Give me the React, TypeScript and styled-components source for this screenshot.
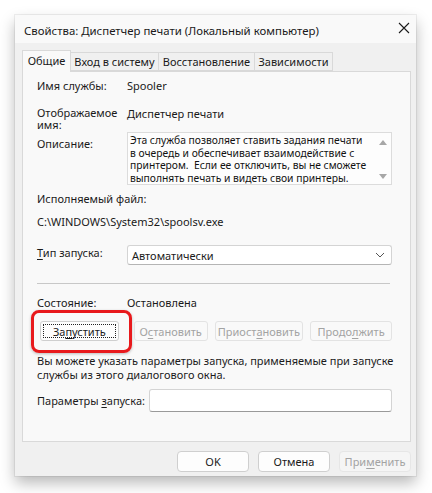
import styled, { createGlobalStyle } from 'styled-components';

const GlobalStyle = createGlobalStyle`
  html, body {
    margin: 0;
    padding: 0;
    background: #ffffff;
  }
  body {
    font-family: 'Noto Sans', 'Segoe UI', sans-serif;
    font-size: 11px;
    color: #1b1b1b;
  }
`;

const Page = styled.div`
  width: 432px;
  height: 493px;
  padding: 15px 0 0 15px;
  box-sizing: border-box;
`;

const Window = styled.div`
  width: 401px;
  height: 461px;
  background: #f0f0f0;
  display: flex;
  flex-direction: column;
  box-shadow: 0 7px 14px rgba(0, 0, 0, 0.28), 0 0 0 1px rgba(0, 0, 0, 0.06);
`;

const TitleBar = styled.div`
  height: 28px;
  background: #f9f9f9;
  display: flex;
  align-items: center;
  justify-content: space-between;
  padding: 3px 6px 0 9px;
  box-sizing: border-box;
  font-size: 11.4px;
  color: #1a1a1a;
`;

const CloseButton = styled.div`
  width: 12px;
  height: 12px;
  margin-top: -5px;
  display: flex;
`;

const Body = styled.div`
  flex: 1;
  display: flex;
  flex-direction: column;
  padding: 7px 5px 0 7px;
`;

const Tabs = styled.div`
  display: flex;
  align-items: flex-end;
  height: 21px;
  position: relative;
  z-index: 1;
`;

const Tab = styled.div<{ $active?: boolean; $w: number }>`
  width: ${(p) => p.$w}px;
  height: ${(p) => (p.$active ? 22 : 19)}px;
  box-sizing: border-box;
  border: 1px solid #d9d9d9;
  border-bottom: ${(p) => (p.$active ? 'none' : '1px solid #d9d9d9')};
  border-left: ${(p) => (p.$active ? '1px solid #d9d9d9' : 'none')};
  background: ${(p) => (p.$active ? '#f9f9f9' : '#f0f0f0')};
  display: flex;
  align-items: center;
  justify-content: center;
  margin-bottom: ${(p) => (p.$active ? -1 : 0)}px;
  padding-bottom: ${(p) => (p.$active ? 2 : 0)}px;
  color: #1a1a1a;
  white-space: nowrap;
`;

const Panel = styled.div`
  width: 389px;
  height: 371px;
  box-sizing: border-box;
  border: 1px solid #d9d9d9;
  background: #f9f9f9;
  padding: 6px 18px 0 14px;
  display: flex;
  flex-direction: column;
`;

const Row = styled.div<{ $top: number }>`
  display: flex;
  align-items: flex-start;
  margin-top: ${(p) => p.$top}px;
  line-height: 15px;
`;

const Label = styled.div<{ $pad?: number; $w?: number }>`
  width: ${(p) => p.$w || 90}px;
  flex-shrink: 0;
  padding-top: ${(p) => p.$pad || 0}px;
  line-height: ${(p) => (p.$pad === undefined ? 15 : 13)}px;
  white-space: nowrap;
`;

const TwoLineLabel = styled.div`
  width: 90px;
  flex-shrink: 0;
  line-height: 12px;
  margin-top: 1px;
`;

const Value = styled.div`
  color: #1a1a1a;
  white-space: nowrap;
`;

const DescBox = styled.div`
  width: 266px;
  height: 53px;
  box-sizing: border-box;
  border: 1px solid #dcdcdc;
  background: #fdfdfd;
  display: flex;
  overflow: hidden;
`;

const DescText = styled.div`
  flex: 1;
  padding: 1px 0 0 2px;
  line-height: 12.5px;
  font-size: 10.3px;
  color: #111;
  overflow: hidden;
`;

const Line = styled.span`
  display: block;
  white-space: pre;
`;

const ScrollBar = styled.div`
  width: 16px;
  flex-shrink: 0;
  display: flex;
  flex-direction: column;
  justify-content: space-between;
  align-items: center;
  padding: 7px 0 5px;
`;

const Arrow = styled.div<{ $down?: boolean }>`
  width: 0;
  height: 0;
  border-left: 4px solid transparent;
  border-right: 4px solid transparent;
  ${(p) =>
    p.$down ? 'border-top: 5px solid #a7a7a7;' : 'border-bottom: 5px solid #a7a7a7;'}
`;

const Combo = styled.div`
  width: 266px;
  height: 20px;
  box-sizing: border-box;
  border: 1px solid #d4d4d4;
  border-bottom-color: #b5b5b5;
  border-radius: 3px;
  background: #ffffff;
  display: flex;
  align-items: center;
  justify-content: space-between;
  padding: 0 6px 0 4px;
`;

const Separator = styled.div<{ $top: number }>`
  height: 1px;
  width: 353px;
  background: #c8c8c8;
  margin-top: ${(p) => p.$top}px;
`;

const ButtonRow = styled.div`
  display: flex;
  margin-top: 11px;
  margin-left: 3px;
`;

const ServiceButton = styled.div<{ $w: number; $ml: number; $disabled?: boolean }>`
  width: ${(p) => p.$w}px;
  height: 20px;
  margin-left: ${(p) => p.$ml}px;
  box-sizing: border-box;
  border: 1px solid ${(p) => (p.$disabled ? '#e3e3e3' : '#cfcfcf')};
  border-radius: 3px;
  background: ${(p) => (p.$disabled ? '#f9f9f9' : '#fdfdfd')};
  color: ${(p) => (p.$disabled ? '#a3a3a3' : '#1a1a1a')};
  display: flex;
  align-items: center;
  justify-content: center;
  position: relative;
  white-space: nowrap;
`;

const FocusRing = styled.div`
  position: absolute;
  inset: 2px;
  border: 1px dotted #222;
`;

const Highlight = styled.div`
  position: absolute;
  left: -10px;
  top: -12px;
  width: 101px;
  height: 43px;
  box-sizing: border-box;
  border: 3px solid #e8191c;
  border-radius: 8px;
  box-shadow: 0 1px 3px rgba(0, 0, 0, 0.25);
  pointer-events: none;
`;

const Note = styled.div`
  margin-top: 13px;
  line-height: 14px;
`;

const ParamInput = styled.div`
  width: 244px;
  height: 23px;
  box-sizing: border-box;
  border: 1px solid #d4d4d4;
  border-bottom-color: #9a9a9a;
  border-radius: 3px;
  background: #ffffff;
`;

const Footer = styled.div`
  display: flex;
  justify-content: flex-end;
  gap: 9px;
  margin-top: 9px;
`;

const DialogButton = styled.div<{ $disabled?: boolean }>`
  width: 72px;
  height: 21px;
  box-sizing: border-box;
  border: 1px solid ${(p) => (p.$disabled ? '#e6e6e6' : '#cfcfcf')};
  border-radius: 4px;
  background: ${(p) => (p.$disabled ? '#f5f5f5' : '#fdfdfd')};
  color: ${(p) => (p.$disabled ? '#a3a3a3' : '#1a1a1a')};
  display: flex;
  align-items: center;
  justify-content: center;
`;

const U = styled.span`
  text-decoration: underline;
  text-underline-offset: 2px;
`;

export default function App() {
  return (
    <>
      <GlobalStyle />
      <Page>
        <Window>
          <TitleBar>
            <span>Свойства: Диспетчер печати (Локальный компьютер)</span>
            <CloseButton>
              <svg width="12" height="12" viewBox="0 0 12 12">
                <path d="M1 1 L11 11 M11 1 L1 11" stroke="#1a1a1a" strokeWidth="1.1" fill="none" />
              </svg>
            </CloseButton>
          </TitleBar>
          <Body>
            <Tabs>
              <Tab $active $w={49}>Общие</Tab>
              <Tab $w={88}>Вход в систему</Tab>
              <Tab $w={96}>Восстановление</Tab>
              <Tab $w={78}>Зависимости</Tab>
            </Tabs>
            <Panel>
              <Row $top={0}>
                <Label>Имя службы:</Label>
                <Value>Spooler</Value>
              </Row>
              <Row $top={13}>
                <TwoLineLabel>Отображаемое имя:</TwoLineLabel>
                <Value>Диспетчер печати</Value>
              </Row>
              <Row $top={1}>
                <Label $pad={5}>Описание:</Label>
                <DescBox>
                  <DescText>
                    <Line>Эта служба позволяет ставить задания печати</Line>
                    <Line>в очередь и обеспечивает взаимодействие с</Line>
                    <Line>принтером.  Если ее отключить, вы не сможете</Line>
                    <Line>выполнять печать и видеть свои принтеры.</Line>
                  </DescText>
                  <ScrollBar>
                    <Arrow />
                    <Arrow $down />
                  </ScrollBar>
                </DescBox>
              </Row>
              <Row $top={6}>
                <Value>Исполняемый файл:</Value>
              </Row>
              <Row $top={8}>
                <Value>C:\WINDOWS\System32\spoolsv.exe</Value>
              </Row>
              <Row $top={16}>
                <Label $pad={1}>
                  <U>Т</U>ип запуска:
                </Label>
                <Combo>
                  <span>Автоматически</span>
                  <svg width="10" height="6" viewBox="0 0 10 6">
                    <path d="M1 1 L5 5 L9 1" stroke="#555" strokeWidth="1" fill="none" />
                  </svg>
                </Combo>
              </Row>
              <Separator $top={18} />
              <Row $top={11}>
                <Label>Состояние:</Label>
                <Value>Остановлена</Value>
              </Row>
              <ButtonRow>
                <ServiceButton $w={79} $ml={0}>
                  <FocusRing />
                  <span>
                    За<U>п</U>устить
                  </span>
                  <Highlight />
                </ServiceButton>
                <ServiceButton $w={74} $ml={15} $disabled>
                  <span>
                    О<U>с</U>тановить
                  </span>
                </ServiceButton>
                <ServiceButton $w={89} $ml={7} $disabled>
                  <span>
                    Приост<U>а</U>новить
                  </span>
                </ServiceButton>
                <ServiceButton $w={82} $ml={7} $disabled>
                  <span>
                    Продо<U>л</U>жить
                  </span>
                </ServiceButton>
              </ButtonRow>
              <Note>
                <Line>Вы можете указать параметры запуска, применяемые при запуске</Line>
                <Line>службы из этого диалогового окна.</Line>
              </Note>
              <Row $top={7}>
                <Label $pad={5} $w={112}>
                  Параметры <U>з</U>апуска:
                </Label>
                <ParamInput />
              </Row>
            </Panel>
            <Footer>
              <DialogButton>OK</DialogButton>
              <DialogButton>Отмена</DialogButton>
              <DialogButton $disabled>
                <span>
                  При<U>м</U>енить
                </span>
              </DialogButton>
            </Footer>
          </Body>
        </Window>
      </Page>
    </>
  );
}
